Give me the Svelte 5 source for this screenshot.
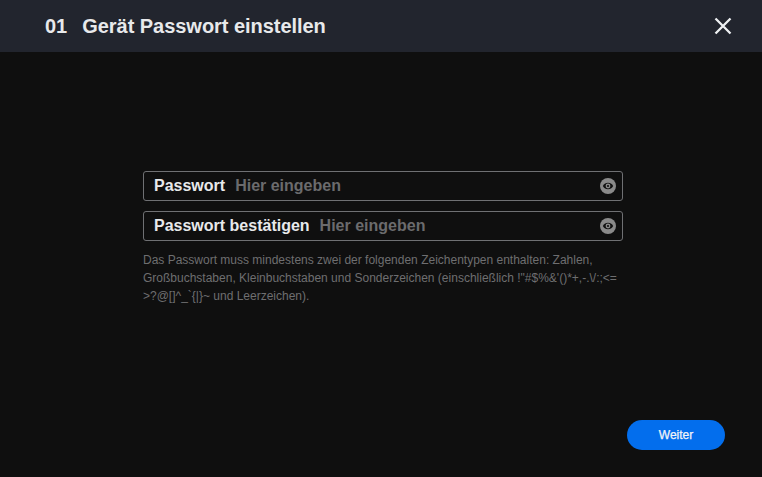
<script>
  const fields = [{ label: 'Passwort' }, { label: 'Passwort bestätigen' }];
</script>

<div class="page">
  <header class="top">
    <h1><span class="num">01</span><span class="title">Gerät Passwort einstellen</span></h1>
    <button class="close" aria-label="Schließen">
      <svg viewBox="0 0 18 18" width="18" height="18"><path d="M1.500 1.500 16.500 16.500M16.500 1.500 1.500 16.500" stroke="#eef0f2" stroke-width="2.300" fill="none" /></svg>
    </button>
  </header>
  <main class="body">
    <form class="form">
      {#each fields as f}
        <div class="field">
          <span class="label">{f.label}</span>
          <span class="ph">Hier eingeben</span>
          <svg class="eye" viewBox="0 0 16 16" width="16" height="16">
            <circle cx="8" cy="8" r="8" fill="#8a8a8a" />
            <path d="M2.800 8c1.300-2.200 3-3.300 5.200-3.300s3.900 1.100 5.200 3.300c-1.300 2.200-3 3.300-5.200 3.300S4.100 10.200 2.800 8z" fill="#111" />
            <circle cx="8" cy="8" r="2.400" fill="#8a8a8a" />
            <circle cx="8" cy="8" r="1.100" fill="#111" />
          </svg>
        </div>
      {/each}
      <p class="hint">Das Passwort muss mindestens zwei der folgenden Zeichentypen enthalten: Zahlen, Großbuchstaben, Kleinbuchstaben und Sonderzeichen (einschließlich !"#$%&amp;'()*+,-.\/:;&lt;=<wbr />&gt;?@[]^_`{'{'}|{'}'}~ und Leerzeichen).</p>
    </form>
    <div class="foot"><button class="next">Weiter</button></div>
  </main>
</div>

<style>
  :global(body) { margin: 0; background: #0f0f0f; }
  .page { width: 762px; height: 477px; display: flex; flex-direction: column; font-family: "Liberation Sans", Arial, sans-serif; background: #0f0f0f; overflow: hidden; }
  .top { height: 52px; flex: none; background: #22252e; display: flex; align-items: center; justify-content: space-between; padding: 0 30px 0 45px; }
  h1 { margin: 0; font-size: 20px; font-weight: 700; color: #e8e9eb; display: flex; gap: 15px; }
  .title { letter-spacing: -0.04px; }
  .close { background: none; border: 0; padding: 0; display: flex; }
  .body { flex: 1; display: flex; flex-direction: column; justify-content: space-between; padding: 119px 37px 27px 143px; }
  .form { width: 480px; display: flex; flex-direction: column; gap: 10px; }
  .field { height: 28px; border: 1px solid #6f7073; border-radius: 3px; display: flex; align-items: center; padding: 0 6px 0 10px; gap: 10px; font-size: 16px; }
  .label { color: #e8e9eb; font-weight: 700; }
  .ph { color: #6b6b6d; font-weight: 700; flex: 1; }
  .eye { flex: none; }
  .hint { margin: 0; font-size: 12px; line-height: 18px; color: #6e6e70; }
  .foot { display: flex; justify-content: flex-end; }
  .next { width: 98px; height: 30px; border: 0; border-radius: 15px; background: #036eed; color: #f2f4f8; font: 400 12px "Liberation Sans", Arial, sans-serif; -webkit-text-stroke: 0.25px #f2f4f8; }
</style>
